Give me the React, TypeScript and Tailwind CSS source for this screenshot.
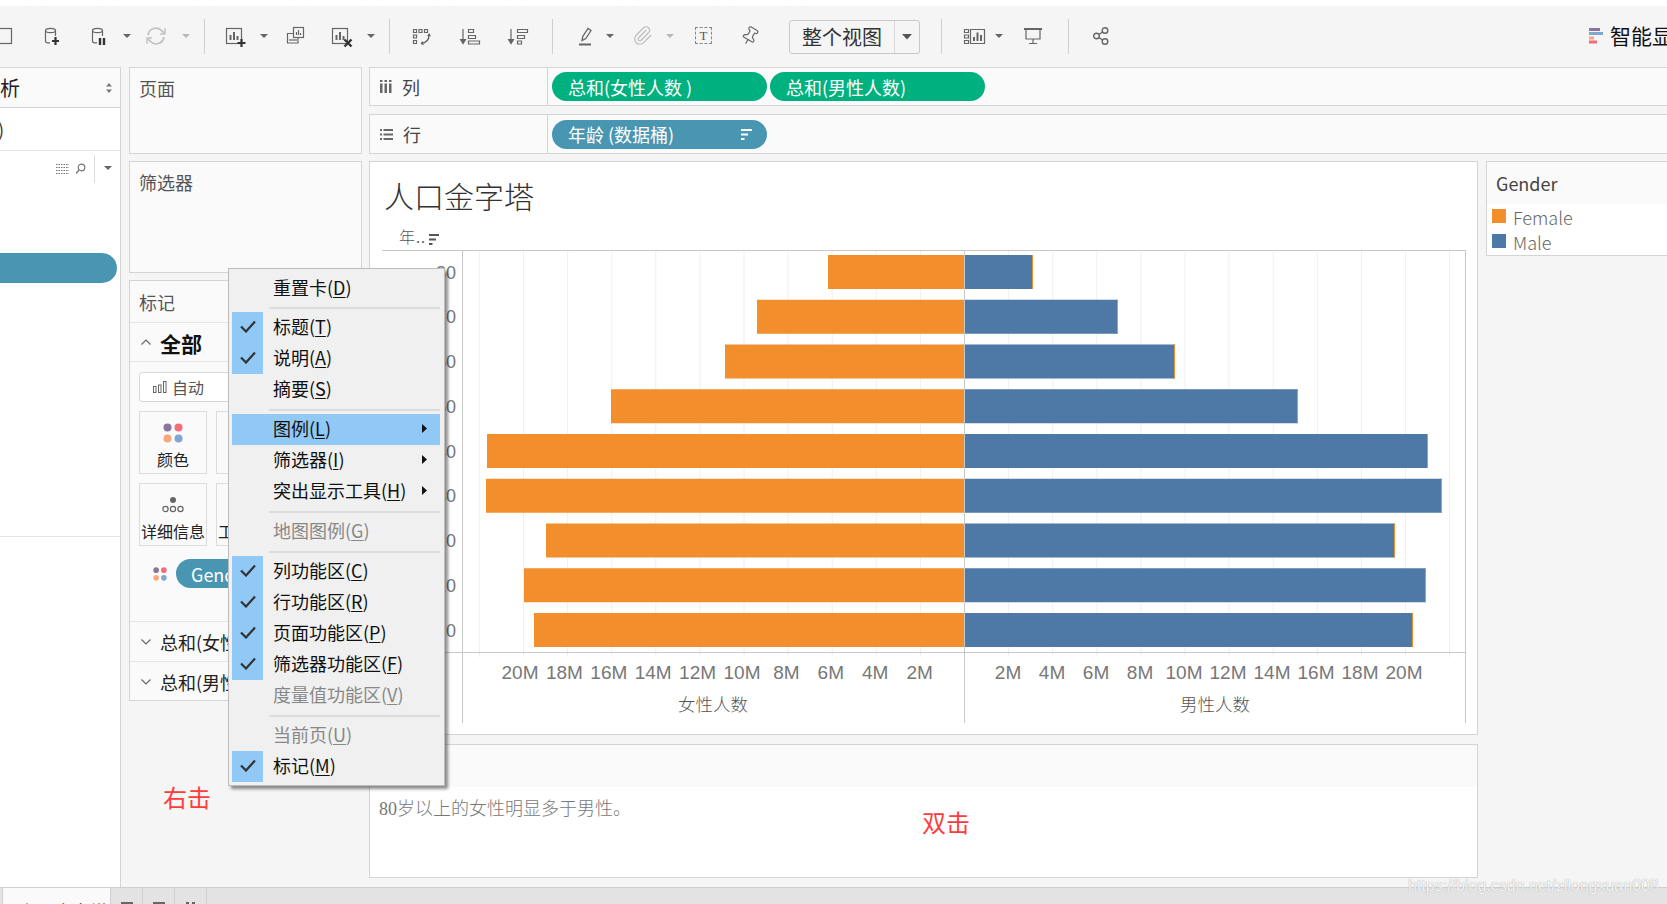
import React from "react";
import { Paperclip, Pin } from "lucide-react";

const S = "#666666";

function Caret({ cls, c = "#666" }: { cls: string; c?: string }) {
  return (
    <svg width="10" height="6" viewBox="0 0 10 6" className={"mb-[2px] shrink-0 " + cls}>
      <path d="M1 1h8L5 5z" fill={c} />
    </svg>
  );
}

function Ico({ cls, children }: { cls: string; children: React.ReactNode }) {
  return (
    <svg width="24" height="24" viewBox="0 0 24 24" fill="none" stroke={S} strokeWidth="1.2" className={"mb-[2px] shrink-0 " + cls}>
      {children}
    </svg>
  );
}

function Sep({ cls }: { cls: string }) {
  return <div className={"h-[35px] w-px shrink-0 bg-[#d0d0d0] " + cls} />;
}

function Db() {
  return (
    <>
      <ellipse cx="11.5" cy="6.5" rx="5" ry="2.2" />
      <path d="M6.5 6.5V17q0 1.8 2.5 1.8h2M16.5 6.5V12" />
    </>
  );
}

function ChartBox() {
  return (
    <>
      <rect x="2.5" y="4.5" width="15" height="15" />
      <path d="M6.5 16v-5M10 16V8M13.5 16v-4" strokeWidth="2" />
    </>
  );
}

function Toolbar() {
  return (
    <div className="flex h-[61px] items-center bg-[#f5f5f5]">
      <Ico cls="-ml-[11px]">
        <rect x="1.5" y="4.5" width="21" height="15" />
        <rect x="0" y="14" width="8" height="5" fill={S} stroke="none" />
      </Ico>
      <Ico cls="ml-[26px]">
        <Db />
        <path d="M16.5 13v8M13 17h7" stroke="#333" strokeWidth="2.2" />
      </Ico>
      <Ico cls="ml-[23px]">
        <Db />
        <path d="M14 14v7M18 14v7" stroke="#333" strokeWidth="2.4" />
      </Ico>
      <Caret cls="ml-[12px]" />
      <Ico cls="ml-[12px]">
        <path d="M4 11a8 8 0 0 1 14-4l2 2M20 13a8 8 0 0 1-14 4l-2-2" stroke="#c2c2c2" strokeWidth="1.8" />
        <path d="M21 4v6h-5M3 20v-6h5" stroke="#c2c2c2" strokeWidth="1.4" />
      </Ico>
      <Caret cls="ml-[13px]" c="#b8b8b8" />
      <Sep cls="ml-[13px]" />
      <Ico cls="ml-[19px]">
        <ChartBox />
        <path d="M17.5 15v8M13.5 19h8" stroke="#333" strokeWidth="2.2" />
      </Ico>
      <Caret cls="ml-[11px]" />
      <Ico cls="ml-[14px]">
        <rect x="10.5" y="3.5" width="10" height="10" />
        <path d="M13.5 11V8M15.5 11V6M17.5 11V9" />
        <path d="M10 9.5H4.5v9.5h10.500v-5" />
        <path d="M7 17v-2M9 17v-2M11 17v-2M13 17v-2" />
      </Ico>
      <Ico cls="ml-[23px]">
        <ChartBox />
        <path d="M14.500 15.500l7 7M21.500 15.500l-7 7" stroke="#333" strokeWidth="2.4" />
      </Ico>
      <Caret cls="ml-[12px]" />
      <Sep cls="ml-[13px]" />
      <Ico cls="ml-[19px]">
        <path d="M4.500 5.500h3v3h-3zM10 5.500h3v3h-3zM15.500 5.500h3v3h-3zM4.500 11h3v3h-3zM4.500 16.500h3v3h-3z" />
        <path d="M20 11c0 5-3 8-8 8.500" strokeWidth="1.400" />
        <path d="M18 12l2.300-3 1.700 3.200M14 17l-2.500 2.500 3 2" fill={S} stroke="none" />
      </Ico>
      <Ico cls="ml-[25px]">
        <path d="M5 5v13M2.500 15.500L5 19.500l2.500-4z" fill={S} />
        <path d="M10.500 5.500h5v3h-5zM10.500 11.500h7v3h-7zM10.500 17h11v3h-11z" />
      </Ico>
      <Ico cls="ml-[24px]">
        <path d="M5 5v13M2.500 15.500L5 19.500l2.500-4z" fill={S} />
        <path d="M11.500 5.500h10v3h-10zM11.500 11.500h7v3h-7zM11.500 17h4v3h-4z" />
      </Ico>
      <Sep cls="ml-[22px]" />
      <Ico cls="ml-[20px]">
        <path d="M9 16.500l.8-4 5.200-8 3 2-5.200 8z" strokeWidth="1.300" />
        <path d="M6 20.500h12" strokeWidth="2" />
      </Ico>
      <Caret cls="ml-[8px]" />
      <div className="mb-[2px] ml-[15px] flex h-[24px] w-[24px] shrink-0 items-center justify-center">
        <Paperclip size={21} color="#bdbdbd" strokeWidth={1.4} />
      </div>
      <Caret cls="ml-[11px]" c="#b8b8b8" />
      <div className="mb-[2px] ml-[20px] flex h-[17px] w-[17px] shrink-0 items-center justify-center border border-dashed border-[#888] font-['Liberation_Serif',serif] text-[13px] leading-none text-[#555]">
        T
      </div>
      <div className="mb-[2px] ml-[26px] flex h-[24px] w-[24px] shrink-0 items-center justify-center">
        <Pin size={20} color="#666" strokeWidth={1.4} className="rotate-[30deg]" />
      </div>
      <div className="ml-[27px] flex h-[34px] w-[131px] shrink-0 items-center rounded-[3px] border border-[#c8c8c8]">
        <span className="flex h-full w-[104px] items-center justify-center text-[20px] leading-none text-[#333]">整个视图</span>
        <span className="flex h-full flex-1 items-center justify-center border-l border-[#d8d8d8]">
          <svg width="12" height="7" viewBox="0 0 12 7">
            <path d="M1 1h10L6 6.500z" fill="#555" />
          </svg>
        </span>
      </div>
      <Sep cls="ml-[21px]" />
      <Ico cls="ml-[20px]">
        <path d="M2.500 5.500h4v3h-4zM2.500 11h4v3h-4zM2.500 16.500h4v3h-4zM8.500 5.500h14v14h-14z" />
        <path d="M12 17v-4M15.500 17V8.500M19 17v-6" strokeWidth="2" />
      </Ico>
      <Caret cls="ml-[8px]" />
      <Ico cls="ml-[17px]">
        <path d="M3 5h18" strokeWidth="2" />
        <path d="M5 5v10h14V5M12 15v4M8 19.500h8" />
      </Ico>
      <Sep cls="ml-[23px]" />
      <Ico cls="ml-[20px]">
        <circle cx="7.500" cy="12" r="2.800" strokeWidth="1.400" />
        <circle cx="16" cy="6.500" r="2.800" strokeWidth="1.400" />
        <circle cx="16" cy="17.500" r="2.800" strokeWidth="1.400" />
        <path d="M10 10.500l3.500-2.500M10 13.500l3.500 2.500" strokeWidth="1.400" />
      </Ico>
      <svg width="14" height="16" viewBox="0 0 14 16" className="mb-[2px] ml-[476px] shrink-0">
        <rect x="0" y="0" width="11" height="3" fill="#8a74a0" />
        <rect x="0" y="4" width="14" height="3" fill="#7fa7d1" />
        <rect x="0" y="8.500" width="5" height="3" fill="#f4a97a" />
        <rect x="0" y="12.500" width="8" height="3" fill="#f26d78" />
      </svg>
      <span className="mb-[2px] ml-[7px] shrink-0 whitespace-nowrap text-[21px] leading-none text-[#111]">智能显示</span>
    </div>
  );
}

function LeftPane() {
  return (
    <div className="flex w-[121px] shrink-0 flex-col border-r border-t border-[#d4d4d4] bg-white">
      <div className="flex h-[40px] items-center justify-between border-b border-[#d4d4d4] bg-[#fafafa] pr-[7px]">
        <div className="flex w-[20px] justify-end overflow-hidden">
          <span className="shrink-0 whitespace-nowrap text-[20px] leading-none text-[#222]">分析</span>
        </div>
        <svg width="8" height="10" viewBox="0 0 8 10">
          <path d="M4 0l3 3.500H1zM4 10L1 6.500h6z" fill="#777" />
        </svg>
      </div>
      <div className="flex h-[43px] items-center border-b border-[#e2e2e2] text-[18px] leading-none text-[#333]">
        <span className="-ml-[2px]">)</span>
      </div>
      <div className="flex h-[35px] items-center">
        <svg width="13" height="10" viewBox="0 0 13 10" className="ml-[56px]" stroke="#777" strokeWidth="1" strokeDasharray="1.500 1">
          <path d="M0 .5h13M0 3.500h13M0 6.500h13M0 9.500h13" />
        </svg>
        <svg width="11" height="11" viewBox="0 0 11 11" fill="none" stroke="#777" strokeWidth="1.200" className="ml-[6px]">
          <circle cx="6.500" cy="4.500" r="3.300" />
          <path d="M4 7L1 10.500" />
        </svg>
        <div className="ml-[8px] h-[28px] w-px bg-[#ddd]" />
        <Caret cls="ml-[8px]" />
      </div>
      <div className="mt-[67px] h-[30px] w-[117px] rounded-r-full bg-[#4996b2]" />
      <div className="mt-[253px] h-px w-full bg-[#e4e4e4]" />
    </div>
  );
}

function Card({ cls, children }: { cls: string; children: React.ReactNode }) {
  return <div className={"border border-[#d4d4d4] bg-[#fafafa] " + cls}>{children}</div>;
}

function Dots({ size }: { size: number }) {
  return (
    <svg width={size} height={size} viewBox="0 0 20 20">
      <circle cx="4.500" cy="4.500" r="4" fill="#8a74a0" />
      <circle cx="15.500" cy="4.500" r="4" fill="#f26d78" />
      <circle cx="4.500" cy="15.500" r="4" fill="#f4a97a" />
      <circle cx="15.500" cy="15.500" r="4" fill="#7fa7d1" />
    </svg>
  );
}

function MarkCard({ label, children }: { label: string; children: React.ReactNode }) {
  return (
    <div className="flex h-[63px] w-[68px] shrink-0 flex-col items-center border border-[#dcdcdc] bg-[#fafafa]">
      <div className="flex h-[37px] items-center pt-[5px]">{children}</div>
      <span className="whitespace-nowrap text-[16px] leading-[20px] text-[#222]">{label}</span>
    </div>
  );
}

function Chevron({ up }: { up?: boolean }) {
  return (
    <svg width="10" height="6" viewBox="0 0 10 6" fill="none" stroke="#666" strokeWidth="1.200" className="ml-[11px] shrink-0">
      <path d={up ? "M.5 5.500L5 1l4.500 4.500" : "M.5 .5L5 5l4.500-4.500"} />
    </svg>
  );
}

function MidColumn() {
  return (
    <div className="ml-[8px] flex w-[233px] shrink-0 flex-col gap-[7px]">
      <Card cls="h-[87px] px-[9px] pt-[7px] text-[18px] leading-[26px] text-[#555]">页面</Card>
      <Card cls="h-[112px] px-[9px] pt-[7px] text-[18px] leading-[26px] text-[#555]">筛选器</Card>
      <Card cls="flex h-[421px] flex-col overflow-hidden">
        <div className="flex h-[42px] shrink-0 items-center border-b border-[#e6e6e6] pl-[9px] text-[18px] leading-none text-[#555]">标记</div>
        <div className="flex h-[39px] shrink-0 items-center border-b border-[#e6e6e6]">
          <Chevron up />
          <span className="ml-[9px] pt-[2px] text-[21px] font-bold leading-none text-[#111]">全部</span>
        </div>
        <div className="ml-[9px] mt-[10px] flex h-[30px] w-[212px] shrink-0 items-center rounded-[3px] border border-[#d8d8d8] bg-white pl-[13px]">
          <svg width="14" height="12" viewBox="0 0 14 12" fill="none" stroke="#666" strokeWidth="1">
            <rect x=".5" y="5.500" width="2.500" height="6" />
            <rect x="5.500" y="4" width="2.500" height="7.500" />
            <rect x="10.500" y=".5" width="2.500" height="11" />
          </svg>
          <span className="ml-[5px] text-[16px] leading-none text-[#555]">自动</span>
        </div>
        <div className="ml-[9px] mt-[9px] flex shrink-0 gap-[9px]">
          <MarkCard label="颜色">
            <Dots size={20} />
          </MarkCard>
          <MarkCard label="大小">
            <Dots size={20} />
          </MarkCard>
        </div>
        <div className="ml-[9px] mt-[9px] flex shrink-0 gap-[9px]">
          <MarkCard label="详细信息">
            <svg width="24" height="18" viewBox="0 0 24 18" fill="none" stroke="#666" strokeWidth="1.200">
              <circle cx="12" cy="4" r="3" fill="#666" stroke="none" />
              <circle cx="4.500" cy="13" r="2.600" />
              <circle cx="12" cy="13" r="2.600" />
              <circle cx="19.500" cy="13" r="2.600" />
            </svg>
          </MarkCard>
          <MarkCard label="工具提示">
            <span />
          </MarkCard>
        </div>
        <div className="mt-[13px] flex h-[29px] shrink-0 items-center">
          <div className="ml-[23px]">
            <Dots size={14} />
          </div>
          <div className="ml-[9px] flex h-full w-[150px] items-center rounded-full bg-[#4996b2] pl-[15px] text-[18px] leading-none text-white">Gender</div>
        </div>
        <div className="mt-[33px] flex h-[40px] shrink-0 items-center border-t border-[#e6e6e6]">
          <Chevron />
          <span className="ml-[9px] whitespace-nowrap text-[18px] leading-none text-[#222]">总和(女性人数)</span>
        </div>
        <div className="flex h-[40px] shrink-0 items-center border-t border-[#e6e6e6]">
          <Chevron />
          <span className="ml-[9px] whitespace-nowrap text-[18px] leading-none text-[#222]">总和(男性人数)</span>
        </div>
      </Card>
    </div>
  );
}

function Shelf({ icon, label, cls, children }: { icon: React.ReactNode; label: string; cls: string; children: React.ReactNode }) {
  return (
    <div className={"flex border border-r-0 border-[#d4d4d4] bg-[#fafafa] " + cls}>
      <div className="flex w-[178px] shrink-0 items-center border-r border-[#d4d4d4] pl-[10px] text-[18px] leading-none text-[#444]">
        {icon}
        <span className="ml-[10px]">{label}</span>
      </div>
      <div className="ml-[4px] flex items-center gap-[3px]">{children}</div>
    </div>
  );
}

function Pill({ text, cls, children }: { text: string; cls: string; children?: React.ReactNode }) {
  return (
    <div className={"flex h-[29px] w-[215px] items-center justify-between rounded-full pl-[16px] pr-[15px] text-[18px] leading-none text-white " + cls}>
      <span className="whitespace-nowrap">{text}</span>
      {children}
    </div>
  );
}

const female = [828, 757, 725, 611, 487, 486, 546, 524, 534];
const male = [1033, 1118, 1175, 1298, 1428, 1442, 1395, 1426, 1413];
const ages = ["80", "70", "60", "50", "40", "30", "20", "10", "0"];
const grid = [1, 2, 3, 4, 5, 6, 7, 8, 9, 10, 11];
const ticks = [2, 4, 6, 8, 10, 12, 14, 16, 18, 20];
const SANS = "'Liberation Sans', sans-serif";
const CJK = "'Liberation Serif', 'Noto Sans CJK SC', serif";

function Chart() {
  return (
    <svg width="1085" height="474" viewBox="382 250 1085 474" className="block shrink-0">
      {grid.map((k) => (
        <g key={k} stroke="#f0f0f0" strokeWidth="1">
          <path d={`M${964.5 - 44.1 * k} 250V657`} />
          <path d={`M${964.5 + 44.1 * k} 250V657`} />
        </g>
      ))}
      {female.map((x, i) => (
        <rect key={i} x={x} y={255 + 44.75 * i} width={964 - x} height="34" fill="#f28e2b" />
      ))}
      {male.map((x, i) => (
        <g key={i}>
          <rect x="965" y={255 + 44.75 * i} width={x - 965} height="34" fill="#4e79a7" />
          <rect x={x - 1} y={255 + 44.75 * i} width="1" height="34" fill="#f28e2b" />
        </g>
      ))}
      <g stroke="#c8c8c8" strokeWidth="1">
        <path d="M382 250.500H1465M382 652.500H1465M462.500 250V723M964.500 250V723M1465.500 250V723" />
      </g>
      {ages.map((a, i) => (
        <text key={i} x="456" y={278.500 + 44.75 * i} textAnchor="end" fontFamily={SANS} fontSize="18" fill="#777">
          {a}
        </text>
      ))}
      {ticks.map((t) => (
        <g key={t} fontFamily={SANS} fontSize="19" fill="#777" textAnchor="middle">
          <text x={964 - 22.2 * t} y="679">{t}M</text>
          <text x={964 + 22 * t} y="679">{t}M</text>
        </g>
      ))}
      <text x="713" y="711" textAnchor="middle" fontFamily={CJK} fontSize="17.500" fontWeight="300" fill="#555">女性人数</text>
      <text x="1215" y="711" textAnchor="middle" fontFamily={CJK} fontSize="17.500" fontWeight="300" fill="#555">男性人数</text>
    </svg>
  );
}

function RightColumn() {
  return (
    <div className="ml-[7px] flex min-w-0 flex-1 flex-col">
      <Shelf
        cls="h-[39px]"
        label="列"
        icon={
          <svg width="12" height="13" viewBox="0 0 12 13" fill="#666">
            <path d="M0 0h2.500v2H0zM4.500 0H7v2H4.500zM9 0h2.500v2H9zM0 3.500h2.500V13H0zM4.500 3.500H7V13H4.500zM9 3.500h2.500V13H9z" />
          </svg>
        }
      >
        <Pill text="总和(女性人数 )" cls="bg-[#00b180]" />
        <Pill text="总和(男性人数)" cls="bg-[#00b180]" />
      </Shelf>
      <Shelf
        cls="mt-[8px] h-[40px]"
        label="行"
        icon={
          <svg width="13" height="11" viewBox="0 0 13 11" fill="#666">
            <path d="M0 0h2v2H0zM3.500 0H13v2H3.500zM0 4.500h2v2H0zM3.500 4.500H13v2H3.500zM0 9h2v2H0zM3.500 9H13v2H3.500z" />
          </svg>
        }
      >
        <Pill text="年龄 (数据桶)" cls="bg-[#4996b2]">
          <svg width="11" height="11" viewBox="0 0 11 11" fill="#fff" className="shrink-0">
            <path d="M0 0h11v2H0zM0 4.500h7v2H0zM0 9h3.500v2H0z" />
          </svg>
        </Pill>
      </Shelf>
      <div className="mt-[7px] flex h-[574px] shrink-0 items-start">
        <div className="flex h-full w-[1109px] shrink-0 flex-col border border-[#d4d4d4] bg-white pl-[12px] pt-[16px]">
          <div className="h-[40px] pl-[2px] font-['Liberation_Serif','Noto_Sans_CJK_SC',serif] text-[30px] font-light leading-[40px] text-[#333]">人口金字塔</div>
          <div className="flex h-[32px] items-center pl-[17px] pt-[8px] font-['Liberation_Serif','Noto_Sans_CJK_SC',serif] text-[16px] font-light leading-none tracking-[1px] text-[#555]">
            <span>年..</span>
            <svg width="11" height="11" viewBox="0 0 11 11" fill="#555" className="ml-[3px] mt-[3px]">
              <path d="M0 0h10v2H0zM0 4.500h7v2H0zM0 9h3.500v2H0z" />
            </svg>
          </div>
          <Chart />
        </div>
        <div className="ml-[8px] h-[95px] flex-1 border border-r-0 border-[#d4d4d4] bg-white">
          <div className="flex h-[42px] items-center bg-[#fafafa] pl-[9px] pt-[-1px] text-[18px] leading-none text-[#444]">Gender</div>
          <div className="ml-[5px] mt-[5px] flex h-[25px] items-start">
            <div className="h-[14px] w-[14px] bg-[#f28e2b]" />
            <span className="ml-[7px] text-[18px] font-light leading-[16px] text-[#666]">Female</span>
          </div>
          <div className="ml-[5px] flex h-[14px] items-start">
            <div className="h-[14px] w-[14px] bg-[#4e79a7]" />
            <span className="ml-[7px] text-[18px] font-light leading-[16px] text-[#666]">Male</span>
          </div>
        </div>
      </div>
      <div className="mt-[9px] h-[134px] w-[1109px] shrink-0 border border-[#d4d4d4] bg-white">
        <div className="h-[42px] bg-[#fafafa]" />
        <div className="pl-[9px] pt-[9px] font-['Liberation_Serif','Noto_Sans_CJK_SC',serif] text-[18px] font-light leading-[26px] text-[#777]">80岁以上的女性明显多于男性。</div>
      </div>
    </div>
  );
}

type Row = { t: string; k: string; on?: boolean; off?: boolean; sub?: boolean; hi?: boolean };

function MenuRow({ t, k, on, off, sub, hi }: Row) {
  return (
    <div className={"flex h-[31px] items-center " + (hi ? "bg-[#90c8f6]" : "")}>
      <div className={"flex h-full w-[31px] shrink-0 items-center justify-center " + (on ? "bg-[#90c8f6]" : "")}>
        {on && (
          <svg width="16" height="13" viewBox="0 0 16 13" fill="none" stroke="#333" strokeWidth="2.200" className="mb-[2px]">
            <path d="M1 6.500l5 5L15 1.500" />
          </svg>
        )}
      </div>
      <span className={"mb-[3px] ml-[10px] whitespace-nowrap text-[18px] leading-none " + (off ? "text-[#888]" : "text-[#111]")}>
        {t}(<span className="underline underline-offset-2">{k}</span>)
      </span>
      {sub && (
        <svg width="5" height="9" viewBox="0 0 5 9" className="mb-[2px] ml-auto mr-[13px] shrink-0">
          <path d="M0 0l5 4.500L0 9z" fill="#111" />
        </svg>
      )}
    </div>
  );
}

function MenuSep({ cls }: { cls: string }) {
  return (
    <div className={"flex items-center " + cls}>
      <div className="ml-[37px] h-[2px] flex-1 bg-[#dcdcdc]" />
    </div>
  );
}

function ContextMenu() {
  return (
    <div className="absolute left-[228px] top-[268px] w-[217px] border border-[#bdbdbd] bg-[#f0f0f0] pb-[3px] pl-[3px] pr-[4px] pt-[4px] shadow-[3px_3px_3px_rgba(0,0,0,0.45)]">
      <MenuRow t="重置卡" k="D" />
      <MenuSep cls="h-[8px]" />
      <MenuRow t="标题" k="T" on />
      <MenuRow t="说明" k="A" on />
      <MenuRow t="摘要" k="S" />
      <MenuSep cls="h-[9px]" />
      <MenuRow t="图例" k="L" sub hi />
      <MenuRow t="筛选器" k="I" sub />
      <MenuRow t="突出显示工具" k="H" sub />
      <MenuSep cls="h-[9px]" />
      <MenuRow t="地图图例" k="G" off />
      <MenuSep cls="h-[9px]" />
      <MenuRow t="列功能区" k="C" on />
      <MenuRow t="行功能区" k="R" on />
      <MenuRow t="页面功能区" k="P" on />
      <MenuRow t="筛选器功能区" k="F" on />
      <MenuRow t="度量值功能区" k="V" off />
      <MenuSep cls="h-[9px]" />
      <MenuRow t="当前页" k="U" off />
      <MenuRow t="标记" k="M" on />
    </div>
  );
}

function Tabs() {
  return (
    <div className="flex h-[17px] shrink-0 overflow-hidden border-t border-[#cfcfcf] bg-[#e3e3e3]">
      <div className="ml-[2px] h-full w-[109px] shrink-0 border-x border-[#d0d0d0] bg-[#fafafa] pl-[15px] pt-[11px] text-[18px] leading-[24px] text-[#444]">人口金字塔</div>
      <div className="flex h-full w-[32px] shrink-0 justify-center border-r border-[#d0d0d0] pt-[14px]"><div className="h-[3px] w-[12px] bg-[#666]" /></div>
      <div className="flex h-full w-[32px] shrink-0 justify-center border-r border-[#d0d0d0] pt-[14px]"><div className="h-[3px] w-[12px] bg-[#666]" /></div>
      <div className="flex h-full w-[32px] shrink-0 justify-center gap-[3px] border-r border-[#d0d0d0] pt-[14px]"><div className="h-[3px] w-[3px] bg-[#666]" /><div className="h-[3px] w-[3px] bg-[#666]" /></div>
    </div>
  );
}

export default function App() {
  return (
    <div className="relative flex h-[904px] w-[1667px] flex-col overflow-hidden bg-[#f5f5f5] font-['Noto_Sans_CJK_SC','Noto_Sans',sans-serif]">
      <div className="h-[6px] shrink-0 overflow-hidden bg-white">
        <div className="-ml-[12px] -mt-[23px] flex gap-[14px] whitespace-nowrap text-[18px] leading-[24px] text-[#222]">
          {["文件(F)", "数据(D)", "工作表(W)", "仪表板(B)", "故事(T)", "分析(A)", "地图(M)", "设置格式(O)", "服务器(S)", "窗口(N)"].map((m) => (
            <span key={m}>{m}</span>
          ))}
        </div>
      </div>
      <Toolbar />
      <div className="flex h-[820px] shrink-0">
        <LeftPane />
        <MidColumn />
        <RightColumn />
      </div>
      <Tabs />
      <ContextMenu />
      <span className="absolute left-[163px] top-[781px] text-[24px] leading-[32px] text-[#ff3b3b]">右击</span>
      <span className="absolute left-[922px] top-[806px] text-[24px] leading-[32px] text-[#ff3b3b]">双击</span>
      <span className="absolute left-[1408px] top-[876px] whitespace-nowrap font-['Liberation_Sans',sans-serif] text-[16px] leading-[20px] text-[#f5f5f5] [text-shadow:0_0_1px_#999]">https://blog.csdn.net/zilongxuan008</span>
    </div>
  );
}
